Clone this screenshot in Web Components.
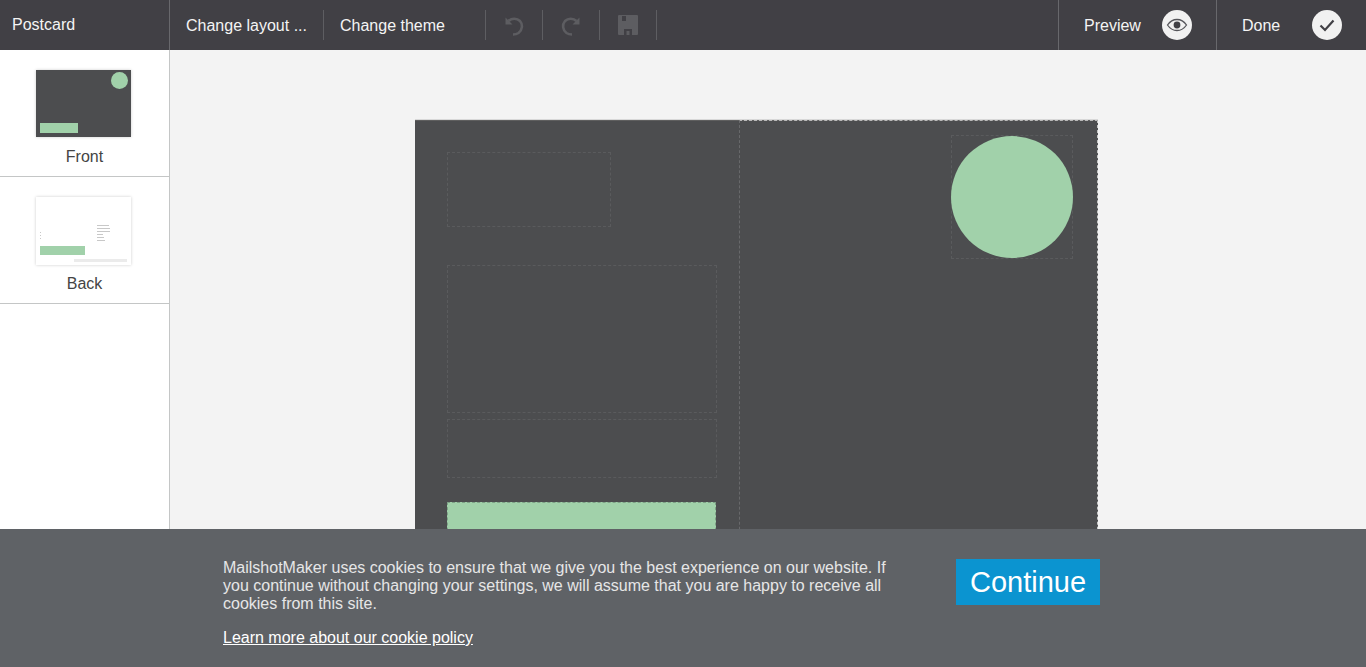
<!DOCTYPE html>
<html>
<head>
<meta charset="utf-8">
<title>Postcard</title>
<style>
html, body { margin: 0; height: 100%; overflow: hidden; font-family: "Liberation Sans", Arial, sans-serif; }
</style>
</head>
<body>
<mm-app>
  <mm-toolbar slot="top"></mm-toolbar>
  <mm-sidebar slot="side">
    <mm-thumb label="Front" kind="front"></mm-thumb>
    <mm-thumb label="Back" kind="back"></mm-thumb>
  </mm-sidebar>
  <mm-postcard slot="main"></mm-postcard>
  <mm-cookie slot="over">
    MailshotMaker uses cookies to ensure that we give you the best experience on our website. If you continue without changing your settings, we will assume that you are happy to receive all cookies from this site.
  </mm-cookie>
</mm-app>

<script>
// @ts-check
class MmApp extends HTMLElement {
  constructor() {
    super();
    this._root = this.attachShadow({ mode: "open" });
    this._root.innerHTML = `
      <style>
      :host { display: grid; grid-template-columns: 170px 1fr; grid-template-rows: 50px 1fr; height: 667px; width: 1366px; position: relative; overflow: hidden; background: #f3f3f3; }
      .top { grid-column: 1 / 3; display: flex; min-width: 0; }
      .side { display: block; min-height: 0; }
      .main { display: block; min-width: 0; min-height: 0; overflow: hidden; }
      </style>
      <div class="top"><slot name="top"></slot></div>
      <div class="side"><slot name="side"></slot></div>
      <div class="main"><slot name="main"></slot></div>
      <slot name="over"></slot>
    `;
  }
}

class MmToolbar extends HTMLElement {
  constructor() {
    super();
    this._root = this.attachShadow({ mode: "open" });
    this._root.innerHTML = `
      <style>
      :host { display: flex; flex: 1; height: 50px; background: #414045; color: #f4f4f4; font-size: 16px; align-items: stretch; }
      .title { width: 157px; padding-left: 12px; border-right: 1px solid #68686c; line-height: 49px; }
      .group { display: flex; align-items: center; }
      .btn { height: 30px; line-height: 31px; border-right: 1px solid #5e5e62; box-sizing: border-box; }
      .layout { width: 154px; padding-left: 16px; }
      .theme { width: 162px; padding-left: 16px; }
      .icon { width: 57px; display: flex; align-items: center; justify-content: center; }
      .spacer { flex: 1; }
      .action { display: flex; align-items: center; border-left: 1px solid #68686c; box-sizing: border-box; }
      .preview { width: 158px; padding-left: 25px; }
      .done { width: 150px; padding-left: 25px; }
      .label { line-height: 51px; }
      .preview .label { width: 78px; }
      .done .label { width: 70px; }
      .round { width: 30px; height: 30px; border-radius: 50%; background: #f1f1f1; display: flex; align-items: center; justify-content: center; }
      </style>
      <div class="title">Postcard</div>
      <div class="group">
        <div class="btn layout">Change layout ...</div>
        <div class="btn theme">Change theme</div>
        <div class="btn icon">
          <svg width="24" height="24" viewBox="0 0 24 24" fill="none" stroke="#5d5d61" stroke-width="2.600">
            <path d="M6.500 8 C9.500 5 15 5 18 8 C21 11.500 20.500 17 16.500 20 C15 21 13 21.500 11 21.500"/>
            <path d="M3.500 4.500 V11.500 H10.500 Z" fill="#5d5d61" stroke="none"/>
          </svg>
        </div>
        <div class="btn icon">
          <svg width="24" height="24" viewBox="0 0 24 24" fill="none" stroke="#5d5d61" stroke-width="2.600">
            <path d="M17.500 8 C14.500 5 9 5 6 8 C3 11.500 3.500 17 7.500 20 C9 21 11 21.500 13 21.500"/>
            <path d="M20.500 4.500 V11.500 H13.500 Z" fill="#5d5d61" stroke="none"/>
          </svg>
        </div>
        <div class="btn icon">
          <svg width="22" height="22" viewBox="0 0 22 22">
            <path fill="#5d5d61" fill-rule="evenodd" d="M1 2 Q1 1 2 1 H20 Q21 1 21 2 V20 Q21 21 20 21 H15 V15 H7 V21 H2 Q1 21 1 20 Z M5 2 V7 H9 V2 Z M9.500 17 H12.500 V21 H9.500 Z"/>
          </svg>
        </div>
      </div>
      <div class="spacer"></div>
      <div class="action preview">
        <span class="label">Preview</span>
        <span class="round">
          <svg width="22" height="22" viewBox="0 0 22 22" fill="none" stroke="#55555a">
            <path stroke-width="1.300" d="M1.500 11 C4 7.300 7.300 5.500 11 5.500 C14.700 5.500 18 7.300 20.500 11 C18 14.700 14.700 16.500 11 16.500 C7.300 16.500 4 14.700 1.500 11 Z"/>
            <circle cx="11" cy="11" r="3.400" fill="#414045" stroke="none"/>
          </svg>
        </span>
      </div>
      <div class="action done">
        <span class="label">Done</span>
        <span class="round">
          <svg width="18" height="18" viewBox="0 0 18 18" fill="none" stroke="#414045" stroke-width="2.200">
            <path d="M2.500 9.500 L7 14 L15.500 4.500"/>
          </svg>
        </span>
      </div>
    `;
  }
}

class MmSidebar extends HTMLElement {
  constructor() {
    super();
    this._root = this.attachShadow({ mode: "open" });
    this._root.innerHTML = `
      <style>
      :host { display: block; height: 100%; box-sizing: border-box; background: #fff; border-right: 1px solid #c4c6c6; }
      </style>
      <slot></slot>
    `;
  }
}

class MmThumb extends HTMLElement {
  constructor() {
    super();
    this._root = this.attachShadow({ mode: "open" });
    const back = this.getAttribute("kind") === "back";
    const picture = back ? `
      <svg width="95" height="68" viewBox="0 0 95 68">
        <rect x="4" y="49" width="45" height="9" fill="#a1d1aa"/>
        <g fill="#c8c8c8">
          <rect x="61" y="28" width="12" height="1"/><rect x="61" y="31" width="13" height="1"/>
          <rect x="61" y="34" width="13" height="1"/><rect x="61" y="37" width="6" height="1"/>
          <rect x="61" y="40" width="7" height="1"/><rect x="61" y="43" width="8" height="1"/>
          <rect x="4" y="35" width="1" height="1"/><rect x="4" y="38" width="1" height="1"/><rect x="4" y="41" width="1" height="1"/>
        </g>
        <rect x="38" y="62" width="53" height="3" fill="#ebebeb"/>
      </svg>` : `
      <svg width="95" height="67" viewBox="0 0 95 67">
        <circle cx="83.500" cy="10.500" r="8.500" fill="#a1d1aa"/>
        <rect x="4" y="53" width="38" height="10" fill="#a1d1aa"/>
      </svg>`;
    this._root.innerHTML = `
      <style>
      :host { display: block; height: 127px; box-sizing: border-box; border-bottom: 1px solid #c4c6c6; padding-top: 20px; text-align: center; color: #444; font-size: 16px; }
      :host([kind="front"]) .pic { background: #4c4d4f; height: 67px; }
      .pic { width: 95px; height: 68px; margin: 0 auto 0 36px; background: #fff; box-shadow: 0 0 3px rgba(0,0,0,.2); }
      .pic svg { display: block; filter: blur(.35px); }
      .name { margin-top: ${back ? 9 : 10}px; line-height: 20px; }
      </style>
      <div class="pic">${picture}</div>
      <div class="name">${this.getAttribute("label")}</div>
    `;
  }
}

class MmPostcard extends HTMLElement {
  constructor() {
    super();
    this._root = this.attachShadow({ mode: "open" });
    this._root.innerHTML = `
      <style>
      :host { display: block; padding: 70px 0 0 245px; height: 100%; box-sizing: border-box; }
      .card { position: relative; width: 683px; height: 470px; background: #4c4d4f; box-shadow: 0 -1px 0 #d8d8d8; border-top: 1px solid #5f5f5f; box-sizing: border-box; }
      .box { position: absolute; box-sizing: border-box; border: 1px dashed #5a5b5d; }
      .fold { position: absolute; left: 324px; top: -1px; bottom: 0; right: 0; box-sizing: border-box; border-left: 1px dashed #68696b; border-top: 1px dashed #b9b9b9; border-right: 1px dashed #c9c9c9; }
      .green { background: #a1d1aa; border-color: #7da086; }
      .circle { position: absolute; left: 536px; top: 15px; width: 122px; height: 122px; border-radius: 50%; background: #a1d1aa; }
      </style>
      <div class="card">
        <div class="fold"></div>
        <div class="box" style="left:32px;top:31px;width:164px;height:75px"></div>
        <div class="box" style="left:32px;top:144px;width:270px;height:148px"></div>
        <div class="box" style="left:32px;top:298px;width:270px;height:59px"></div>
        <div class="box green" style="left:32px;top:381px;width:269px;height:80px"></div>
        <div class="box" style="left:536px;top:14px;width:122px;height:124px"></div>
        <div class="circle"></div>
      </div>
    `;
  }
}

class MmCookie extends HTMLElement {
  constructor() {
    super();
    this._root = this.attachShadow({ mode: "open" });
    this._root.innerHTML = `
      <style>
      :host { position: absolute; left: 0; right: 0; bottom: 0; height: 138px; background: #5f6266; color: #e6e6e6; display: flex; padding: 30px 0 0 223px; box-sizing: border-box; font-size: 16px; line-height: 18px; }
      .text { width: 670px; }
      .msg { margin-bottom: 16px; }
      a { color: #fff; text-decoration: underline; }
      button { margin-left: 63px; width: 144px; height: 46px; border: 0; padding: 0; background: #0b94d0; color: #fff; font: 29px "Liberation Sans", Arial, sans-serif; }
      </style>
      <div class="text">
        <div class="msg"><slot></slot></div>
        <a href="#">Learn more about our cookie policy</a>
      </div>
      <button>Continue</button>
    `;
  }
}

window.customElements.define("mm-app", MmApp);
window.customElements.define("mm-toolbar", MmToolbar);
window.customElements.define("mm-sidebar", MmSidebar);
window.customElements.define("mm-thumb", MmThumb);
window.customElements.define("mm-postcard", MmPostcard);
window.customElements.define("mm-cookie", MmCookie);
</script>
</body>
</html>
